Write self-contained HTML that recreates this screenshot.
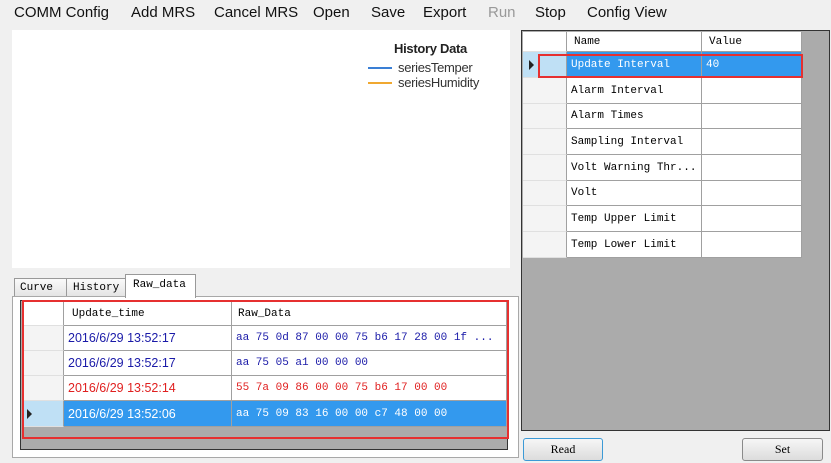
<!DOCTYPE html>
<html><head><meta charset="utf-8"><style>
*{box-sizing:border-box;margin:0;padding:0}
body{width:831px;height:463px;background:#f0f0f0;position:relative;overflow:hidden;font-family:"Liberation Sans",sans-serif}
.a{position:absolute}
.menu{top:4px;font-size:15px;color:#111}
.mono{font-family:"Liberation Mono","DejaVu Sans Mono",monospace;font-size:11px}
.cell{position:absolute;border-right:1px solid #a0a0a0;border-bottom:1px solid #a0a0a0;background:#fff;padding-left:4px;white-space:nowrap;overflow:hidden}
.rh{position:absolute;background:#f4f4f4;border-right:1px solid #a0a0a0;border-bottom:1px solid #e0e0e0}
.btn{position:absolute;border:1px solid #8a8a8a;border-radius:3px;background:linear-gradient(#f6f6f6,#dcdcdc);text-align:center;font-family:"Liberation Serif",serif;font-size:12px;line-height:21px}
</style></head><body>
<div class="a menu" style="left:14px">COMM Config</div>
<div class="a menu" style="left:131px">Add MRS</div>
<div class="a menu" style="left:214px">Cancel MRS</div>
<div class="a menu" style="left:313px">Open</div>
<div class="a menu" style="left:371px">Save</div>
<div class="a menu" style="left:423px">Export</div>
<div class="a menu" style="left:488px;color:#999">Run</div>
<div class="a menu" style="left:535px">Stop</div>
<div class="a menu" style="left:587px">Config View</div>

<div class="a" style="left:12px;top:30px;width:498px;height:238px;background:#fff"></div>
<div class="a" style="left:394px;top:41px;font-size:13px;font-weight:bold;color:#222;letter-spacing:-0.3px">History Data</div>
<div class="a" style="left:368px;top:67px;width:24px;height:2px;background:#3a7fd5"></div>
<div class="a" style="left:398px;top:60px;font-size:13px;color:#333;letter-spacing:-0.3px">seriesTemper</div>
<div class="a" style="left:368px;top:82px;width:24px;height:2px;background:#f0a830"></div>
<div class="a" style="left:398px;top:75px;font-size:13px;color:#333;letter-spacing:-0.3px">seriesHumidity</div>

<div class="a mono" style="left:14px;top:278px;width:53px;height:19px;border:1px solid #999;background:linear-gradient(#fafafa,#e4e4e4);padding:3px 0 0 5px">Curve</div>
<div class="a mono" style="left:66px;top:278px;width:60px;height:19px;border:1px solid #999;background:linear-gradient(#fafafa,#e4e4e4);padding:3px 0 0 6px">History</div>
<div class="a mono" style="left:125px;top:274px;width:71px;height:24px;border:1px solid #999;border-bottom:none;background:#fff;padding:4px 0 0 7px;z-index:2">Raw_data</div>
<div class="a" style="left:12px;top:296px;width:507px;height:162px;border:1px solid #a8a8a8;background:#fff"></div>

<div class="a" style="left:20px;top:300px;width:488px;height:150px;background:#ababab;border:1px solid #333"></div>
<div class="rh" style="left:22px;top:302px;width:42px;height:24px;background:#fff"></div>
<div class="cell mono" style="left:64px;top:302px;width:168px;height:24px;line-height:24px;padding-left:8px">Update_time</div>
<div class="cell mono" style="left:232px;top:302px;width:275px;height:24px;line-height:24px;padding-left:6px">Raw_Data</div>

<div class="rh" style="left:22px;top:326px;width:42px;height:25px"></div>
<div class="cell" style="left:64px;top:326px;width:168px;height:25px;line-height:25px;font-size:12.5px;color:#1a1aa8">2016/6/29 13:52:17</div>
<div class="cell mono" style="left:232px;top:326px;width:275px;height:25px;line-height:25px;color:#1a1aa8">aa 75 0d 87 00 00 75 b6 17 28 00 1f ...</div>

<div class="rh" style="left:22px;top:351px;width:42px;height:25px"></div>
<div class="cell" style="left:64px;top:351px;width:168px;height:25px;line-height:25px;font-size:12.5px;color:#1a1aa8">2016/6/29 13:52:17</div>
<div class="cell mono" style="left:232px;top:351px;width:275px;height:25px;line-height:25px;color:#1a1aa8">aa 75 05 a1 00 00 00</div>

<div class="rh" style="left:22px;top:376px;width:42px;height:25px"></div>
<div class="cell" style="left:64px;top:376px;width:168px;height:25px;line-height:25px;font-size:12.5px;color:#e02020">2016/6/29 13:52:14</div>
<div class="cell mono" style="left:232px;top:376px;width:275px;height:25px;line-height:25px;color:#e02020">55 7a 09 86 00 00 75 b6 17 00 00</div>

<div class="rh" style="left:22px;top:401px;width:42px;height:26px;background:#bfe0f5"></div>
<div class="a" style="left:27px;top:409px;width:0;height:0;border-left:5px solid #222;border-top:5px solid transparent;border-bottom:5px solid transparent"></div>
<div class="cell" style="left:64px;top:401px;width:168px;height:26px;line-height:26px;font-size:12.5px;color:#fff;background:#3399ee">2016/6/29 13:52:06</div>
<div class="cell mono" style="left:232px;top:401px;width:275px;height:26px;line-height:26px;color:#fff;background:#3399ee">aa 75 09 83 16 00 00 c7 48 00 00</div>
<div class="a" style="left:22px;top:300px;width:487px;height:139px;border:2px solid #e63030"></div>

<div class="a" style="left:521px;top:30px;width:309px;height:401px;background:#ababab;border:1px solid #333"></div>
<div class="rh" style="left:523px;top:32px;width:44px;height:20px;background:#fff"></div>
<div class="cell mono" style="left:567px;top:32px;width:135px;height:20px;line-height:20px;padding-left:7px">Name</div>
<div class="cell mono" style="left:702px;top:32px;width:100px;height:20px;line-height:20px;padding-left:7px">Value</div>

<div class="rh" style="left:523px;top:52px;width:44px;height:26px;background:#bfe0f5"></div>
<div class="a" style="left:529px;top:60px;width:0;height:0;border-left:5px solid #222;border-top:5px solid transparent;border-bottom:5px solid transparent"></div>
<div class="cell mono" style="left:567px;top:52px;width:135px;height:26px;line-height:26px;color:#fff;background:#3399ee">Update Interval</div>
<div class="cell mono" style="left:702px;top:52px;width:100px;height:26px;line-height:26px;color:#fff;background:#3399ee">40</div>
<div class="a" style="left:538px;top:54px;width:265px;height:24px;border:2px solid #e63030"></div>

<div class="rh" style="left:523px;top:78px;width:44px;height:26px"></div>
<div class="cell mono" style="left:567px;top:78px;width:135px;height:26px;line-height:26px">Alarm Interval</div>
<div class="cell" style="left:702px;top:78px;width:100px;height:26px"></div>
<div class="rh" style="left:523px;top:104px;width:44px;height:25px"></div>
<div class="cell mono" style="left:567px;top:104px;width:135px;height:25px;line-height:25px">Alarm Times</div>
<div class="cell" style="left:702px;top:104px;width:100px;height:25px"></div>
<div class="rh" style="left:523px;top:129px;width:44px;height:26px"></div>
<div class="cell mono" style="left:567px;top:129px;width:135px;height:26px;line-height:26px">Sampling Interval</div>
<div class="cell" style="left:702px;top:129px;width:100px;height:26px"></div>
<div class="rh" style="left:523px;top:155px;width:44px;height:26px"></div>
<div class="cell mono" style="left:567px;top:155px;width:135px;height:26px;line-height:26px">Volt Warning Thr...</div>
<div class="cell" style="left:702px;top:155px;width:100px;height:26px"></div>
<div class="rh" style="left:523px;top:181px;width:44px;height:25px"></div>
<div class="cell mono" style="left:567px;top:181px;width:135px;height:25px;line-height:25px">Volt</div>
<div class="cell" style="left:702px;top:181px;width:100px;height:25px"></div>
<div class="rh" style="left:523px;top:206px;width:44px;height:26px"></div>
<div class="cell mono" style="left:567px;top:206px;width:135px;height:26px;line-height:26px">Temp Upper Limit</div>
<div class="cell" style="left:702px;top:206px;width:100px;height:26px"></div>
<div class="rh" style="left:523px;top:232px;width:44px;height:26px"></div>
<div class="cell mono" style="left:567px;top:232px;width:135px;height:26px;line-height:26px">Temp Lower Limit</div>
<div class="cell" style="left:702px;top:232px;width:100px;height:26px"></div>

<div class="btn" style="left:523px;top:438px;width:80px;height:23px;border-color:#3c9ad6">Read</div>
<div class="btn" style="left:742px;top:438px;width:81px;height:23px">Set</div>
</body></html>
